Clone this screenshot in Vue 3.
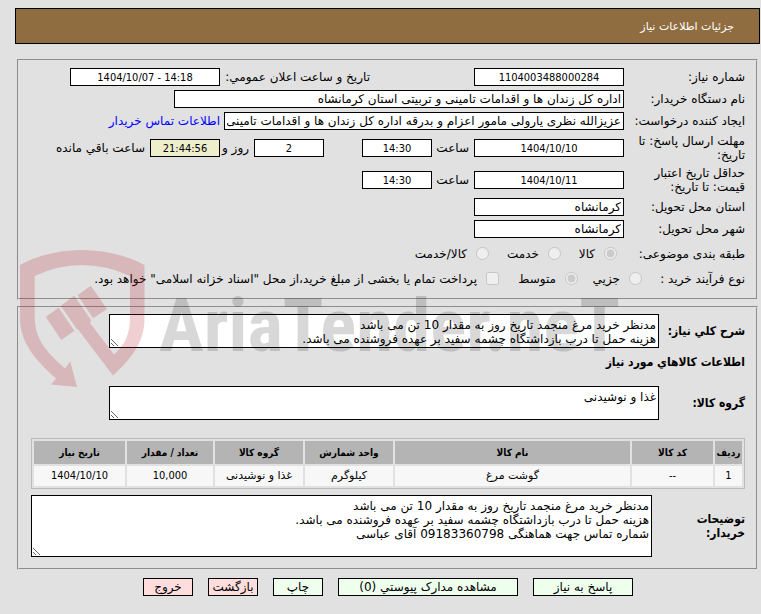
<script setup>
import { ref } from 'vue';

const need = ref({
    number: '1104003488000284',
    announced: '1404/10/07 - 14:18',
    buyer: 'اداره کل زندان ها و اقدامات تامینی و تربیتی استان کرمانشاه',
    creator: 'عزیزالله نظری یارولی مامور اعزام و بدرقه اداره کل زندان ها و اقدامات تامینی و تربیتی استان کرمانشاه',
    replyDate: '1404/10/10',
    replyTime: '14:30',
    days: '2',
    timeLeft: '21:44:56',
    validDate: '1404/10/11',
    validTime: '14:30',
    province: 'کرمانشاه',
    city: 'کرمانشاه',
    summary: 'مدنظر خرید مرغ منجمد تاریخ روز به مقدار 10 تن می باشد\nهزینه حمل تا درب بازداشتگاه چشمه سفید بر عهده فروشنده می باشد.',
    group: 'غذا و نوشیدنی',
    notes: 'مدنظر خرید مرغ منجمد تاریخ روز به مقدار 10 تن می باشد\nهزینه حمل تا درب بازداشتگاه چشمه سفید بر عهده فروشنده می باشد.\nشماره تماس جهت هماهنگی 09183360798 آقای عباسی'
});

const columns = ['ردیف', 'کد کالا', 'نام کالا', 'واحد شمارش', 'گروه کالا', 'تعداد / مقدار', 'تاریخ نیاز'];
const rows = [
    ['1', '--', 'گوشت مرغ', 'کیلوگرم', 'غذا و نوشیدنی', '10,000', '1404/10/10']
];
const isNumeric = (text) => /^[\d/,-]+$/.test(text);
</script>

<template>
    <main class="page" dir="rtl" lang="fa">
        <h1 class="title">جزئیات اطلاعات نیاز</h1>

        <section class="panel panel--form">
            <div class="row">
                <label class="row__label" for="number">شماره نیاز:</label>
                <input id="number" v-model="need.number" class="box box--md" readonly />
                <label class="row__announce" for="announced">تاریخ و ساعت اعلان عمومي:</label>
                <input id="announced" v-model="need.announced" class="box box--md" dir="ltr" readonly />
            </div>
            <div class="row">
                <label class="row__label" for="buyer">نام دستگاه خریدار:</label>
                <input id="buyer" v-model="need.buyer" class="box box--text box--xl" readonly />
            </div>
            <div class="row">
                <label class="row__label" for="creator">ایجاد کننده درخواست:</label>
                <input id="creator" v-model="need.creator" class="box box--text box--lg" readonly />
                <a class="row__link" href="#">اطلاعات تماس خریدار</a>
            </div>
            <div class="row row--tall">
                <label class="row__label" for="reply-date">مهلت ارسال پاسخ: تا تاریخ:</label>
                <input id="reply-date" v-model="need.replyDate" class="box box--md" readonly />
                <label class="row__word" for="reply-time">ساعت</label>
                <input id="reply-time" v-model="need.replyTime" class="box box--sm" readonly />
                <input id="days" v-model="need.days" class="box box--sm box--apart" readonly />
                <label class="row__days" for="days">روز و</label>
                <input id="time-left" v-model="need.timeLeft" class="box box--sm box--timer" readonly />
                <label class="row__left" for="time-left">ساعت باقي مانده</label>
            </div>
            <div class="row row--tall">
                <label class="row__label" for="valid-date">حداقل تاریخ اعتبار قیمت: تا تاریخ:</label>
                <input id="valid-date" v-model="need.validDate" class="box box--md" readonly />
                <label class="row__word" for="valid-time">ساعت</label>
                <input id="valid-time" v-model="need.validTime" class="box box--sm" readonly />
            </div>
            <div class="row">
                <label class="row__label" for="province">استان محل تحویل:</label>
                <input id="province" v-model="need.province" class="box box--text box--md" readonly />
            </div>
            <div class="row">
                <label class="row__label" for="city">شهر محل تحویل:</label>
                <input id="city" v-model="need.city" class="box box--text box--md" readonly />
            </div>
            <div class="row row--kind" role="radiogroup" aria-labelledby="kind-label">
                <span id="kind-label" class="row__label">طبقه بندی موضوعی:</span>
                <label class="choice choice--goods"><input type="radio" name="kind" checked disabled />کالا</label>
                <label class="choice choice--service"><input type="radio" name="kind" disabled />خدمت</label>
                <label class="choice"><input type="radio" name="kind" disabled />کالا/خدمت</label>
            </div>
            <div class="row row--process" role="radiogroup" aria-labelledby="process-label">
                <span id="process-label" class="row__label row__label--short">نوع فرآیند خرید :</span>
                <label class="choice choice--small"><input type="radio" name="process" disabled />جزیي</label>
                <label class="choice choice--medium"><input type="radio" name="process" checked disabled />متوسط</label>
                <label class="choice"><input type="checkbox" disabled />پرداخت تمام یا بخشی از مبلغ خرید،از محل "اسناد خزانه اسلامی" خواهد بود.</label>
            </div>
        </section>

        <section class="panel panel--goods">
            <div class="area-row">
                <label class="strong" for="summary">شرح کلي نیاز:</label>
                <textarea id="summary" v-model="need.summary" class="area" readonly></textarea>
            </div>
            <h2 class="strong">اطلاعات کالاهاي مورد نیاز</h2>
            <div class="area-row area-row--group">
                <label class="strong" for="group">گروه کالا:</label>
                <textarea id="group" v-model="need.group" class="area" readonly></textarea>
            </div>
            <table class="goods">
                <colgroup>
                    <col v-for="n in columns.length" :key="n" :class="'goods__col-' + n" />
                </colgroup>
                <thead>
                    <tr>
                        <th v-for="column in columns" :key="column">{{ column }}</th>
                    </tr>
                </thead>
                <tbody>
                    <tr v-for="(row, i) in rows" :key="i">
                        <td v-for="(cell, j) in row" :key="j" :class="{ goods__number: isNumeric(cell) }">{{ cell }}</td>
                    </tr>
                </tbody>
            </table>
            <div class="area-row area-row--notes">
                <label class="strong strong--notes" for="notes">توضیحات خریدار:</label>
                <textarea id="notes" v-model="need.notes" class="area area--notes" readonly></textarea>
            </div>
        </section>

        <div class="actions">
            <button class="btn btn--md">پاسخ به نیاز</button>
            <button class="btn btn--lg">مشاهده مدارک پیوستي (0)</button>
            <button class="btn">چاپ</button>
            <button class="btn btn--red">بازگشت</button>
            <button class="btn btn--red">خروج</button>
        </div>

        <div class="watermark" dir="ltr" aria-hidden="true">
            <svg class="watermark__shield" width="125" height="138" viewBox="0 0 125 138" fill="#b4141e">
                <path d="M0 15Q28 0 62 0T124.500 15V68C124.500 92 112 108 93 125.500L58.500 80L56.700 78.700L40.700 55.700L54.300 45.700L71 70L70 73L94 104.500C105 95 110 84 110 68V26Q86 15 62 15T14.700 26V68C15 91 29 104 45 118.500L50.300 111.500L57 137L31 134.500L36 128.500C15 110 0 92 0 68Z" />
                <path d="M25.700 66.700L38.700 57.700L54.300 80.700L41.300 90Z" />
                <path d="M57.700 45.300L70.700 35.700L87 59L73 68.300Z" />
            </svg>
            <span class="watermark__text">AriaTender.neT</span>
        </div>
    </main>
</template>

<style>
body {
    background: #e1e1e1;
}
</style>

<style scoped>
.page {
    position: relative;
    padding: 8px 1px 8px 15px;
    color: #000;
    font-family: 'DejaVu Sans', sans-serif;
    font-size: 12px;
    line-height: 14px;
}
.page * {
    box-sizing: border-box;
}

.title {
    margin: 0 0 15px;
    padding: 11px 25px;
    height: 36px;
    border: 1px solid #000;
    background: #8f6d40;
    color: #fff;
    font-size: 11px;
    font-weight: normal;
}

.panel {
    margin: 0 2px 6px;
    border: 2px groove #e1e1e1;
}
.panel--form {
    padding: 5px 11px 8px 0;
}
.panel--goods {
    padding: 6px 11px 11px 12px;
}

.row {
    display: flex;
    align-items: center;
    min-height: 22px;
    white-space: nowrap;
}
.row--tall {
    min-height: 32px;
}
.row--kind {
    min-height: 27px;
}
.row--process {
    min-height: 23px;
}
.row__label {
    flex: none;
    width: 121px;
    padding-left: 8px;
    white-space: normal;
}
.row__label--short {
    width: 96px;
}
.row__announce {
    width: 150px;
    margin-right: 104px;
}
.row__link {
    margin-right: 4px;
    color: #00f;
    text-decoration: none;
}
.row__word {
    width: 42px;
    padding-right: 5px;
}
.row__days {
    width: 34px;
    padding-right: 5px;
}
.row__left {
    padding-right: 5px;
}

.box {
    flex: none;
    height: 18px;
    margin: 0;
    padding: 0 2px;
    border: 1px solid #000;
    border-radius: 0;
    background: #fff;
    color: #000;
    font-family: 'DejaVu Sans Condensed', 'DejaVu Sans', sans-serif;
    font-size: 11px;
    text-align: center;
    outline: none;
}
.box--text {
    font-family: inherit;
    font-size: 12px;
    text-align: right;
}
.box--sm {
    width: 70px;
}
.box--md {
    width: 150px;
}
.box--lg {
    width: 400px;
}
.box--xl {
    width: 450px;
}
.box--apart {
    margin-right: 38px;
}
.box--timer {
    background: #eeeecc;
}

.choice {
    display: flex;
    align-items: center;
    gap: 9px;
}
.choice input {
    width: 13px;
    height: 13px;
    margin: 0 7px 0 0;
}
.choice--goods {
    width: 56px;
}
.choice--service {
    width: 72px;
}
.choice--small {
    width: 64px;
}
.choice--medium {
    width: 79px;
}

.strong {
    margin: 0;
    font-family: 'DejaVu Sans Condensed', 'DejaVu Sans', sans-serif;
    font-size: 12px;
    font-weight: bold;
    line-height: 14px;
}
.area-row {
    display: flex;
    align-items: center;
}
.area-row .strong {
    flex: none;
    width: 86px;
}
.area-row .strong--notes {
    width: 60px;
}
.area {
    display: block;
    flex: none;
    width: 550px;
    height: 34px;
    margin: 0;
    padding: 3px 2px;
    border: 1px solid #000;
    border-radius: 0;
    background: #fff;
    color: #000;
    font: inherit;
    overflow: hidden;
    outline: none;
}
.area--notes {
    flex: 1;
    height: 62px;
    margin-right: 33px;
}
h2.strong {
    padding: 7px 0 17px;
}
.area-row--group {
    margin-bottom: 18px;
}
.area-row--notes {
    margin-top: 6px;
}

.goods {
    width: 100%;
    border: 1px solid #bbb;
    border-spacing: 2px;
    table-layout: fixed;
    font-size: 11px;
}
.goods th,
.goods td {
    padding: 0;
    height: 20px;
    background: #f7f7f7;
    text-align: center;
    white-space: nowrap;
}
.goods th {
    height: 23px;
    background: #b4b4b4;
    font-family: 'DejaVu Sans Condensed', 'DejaVu Sans', sans-serif;
    font-size: 10px;
}
.goods .goods__number {
    font-family: 'DejaVu Sans Condensed', 'DejaVu Sans', sans-serif;
}
.goods__col-1 {
    width: 27px;
}
.goods__col-2 {
    width: 81px;
}
.goods__col-4,
.goods__col-5 {
    width: 88px;
}
.goods__col-6 {
    width: 86px;
}
.goods__col-7 {
    width: 91px;
}

.actions {
    display: flex;
    gap: 15px;
    margin-top: 8px;
    padding-right: 127px;
}
.btn {
    display: flex;
    align-items: center;
    justify-content: center;
    width: 50px;
    height: 18px;
    padding: 0;
    border: 1px solid #000;
    background: #eeffee;
    color: #000;
    font: inherit;
    white-space: nowrap;
    cursor: pointer;
}
.btn--md {
    width: 100px;
}
.btn--lg {
    width: 180px;
}
.btn--red {
    background: #ffdddd;
}

.watermark {
    position: absolute;
    top: 250px;
    left: 20px;
    display: flex;
    gap: 14px;
    pointer-events: none;
}
.watermark__shield {
    opacity: 0.2;
}
.watermark__text {
    padding-top: 25px;
    color: #000;
    opacity: 0.15;
    font-family: 'Roboto Condensed', Roboto, sans-serif;
    font-size: 75px;
    font-weight: bold;
    line-height: 100px;
    white-space: nowrap;
}
</style>
